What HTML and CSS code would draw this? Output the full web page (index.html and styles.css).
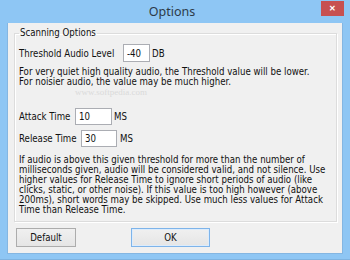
FILE: index.html
```html
<!DOCTYPE html>
<html lang="en">
<head>
    <meta charset="UTF-8">
    <title>Options</title>
    <link rel="stylesheet" href="styles.css">
</head>
<body>
    <div class="window">
        <div class="titlebar">
            <span class="title">Options</span>
            <button class="close">&#x2715;</button>
        </div>
        <div class="client">
            <fieldset class="group">
                <legend>Scanning Options</legend>
                <div class="row row-threshold">
                    <span class="label">Threshold Audio Level</span>
                    <input class="box box-threshold" type="text" value="-40">
                    <span class="unit">DB</span>
                </div>
                <p class="note">
                    For very quiet high quality audio, the Threshold value will be lower.<br>
                    For noisier audio, the value may be much higher.
                </p>
                <div class="mark">www.softpedia.com</div>
                <div class="row row-attack">
                    <span class="label">Attack Time</span>
                    <input class="box box-attack" type="text" value="10">
                    <span class="unit">MS</span>
                </div>
                <div class="row row-release">
                    <span class="label">Release Time</span>
                    <input class="box box-release" type="text" value="30">
                    <span class="unit">MS</span>
                </div>
                <p class="note note-long">
                    If audio is above this given threshold for more than the number of<br>
                    milliseconds given, audio will be considered valid, and not silence. Use<br>
                    higher values for Release Time to ignore short periods of audio (like<br>
                    clicks, static, or other noise). If this value is too high however (above<br>
                    200ms), short words may be skipped. Use much less values for Attack<br>
                    Time than Release Time.
                </p>
            </fieldset>
            <div class="actions">
                <button class="btn btn-default">Default</button>
                <button class="btn btn-ok">OK</button>
            </div>
        </div>
    </div>
</body>
</html>
```

FILE: styles.css
```css
* {
    margin: 0;
    padding: 0;
    box-sizing: border-box;
}
body {
    width: 350px;
    height: 260px;
    background: #8ec6f4;
    font-family: "DejaVu Sans Condensed", "DejaVu Sans", sans-serif;
    font-stretch: condensed;
    font-size: 9.6px;
    color: #111;
}
.window {
    width: 350px;
    height: 260px;
    display: flex;
    flex-direction: column;
    border-bottom: solid 1px #7fb3e0;
}
.titlebar {
    height: 23px;
    display: grid;
    grid-template-columns: 1fr auto 1fr;
    padding-right: 6px;
}
.title {
    grid-column: 2;
    font-family: "Noto Sans", sans-serif;
    font-stretch: normal;
    font-size: 12.5px;
    line-height: 24px;
    color: #2d3a48;
}
.close {
    grid-column: 3;
    justify-self: end;
    width: 23px;
    height: 15px;
    margin-top: 1px;
    border: none;
    background: #c75050;
    color: #fff;
    font-size: 8px;
    font-weight: bold;
    line-height: 15px;
}
/* client area of the dialog */
.client {
    height: 231px;
    margin: 0 7px;
    background: #f0f0f0;
    border: solid 1px #84b6e2;
    border-top: none;
    padding: 0 5px 0 6px;
}
.group {
    margin-top: 4px;
    border: solid 1px #dcdcdc;
    box-shadow: inset 1px 1px 0 #fff, 1px 1px 0 #fff;
    padding: 5px 4px 6px 4px;
}
.group legend {
    line-height: 12px;
    padding: 0 1px;
}
.row {
    display: flex;
    align-items: center;
    white-space: nowrap;
}
.unit {
    margin-left: 2px;
}
.row-threshold {
    height: 18px;
}
.row-threshold .label {
    width: 104px;
}
.row-attack {
    height: 17px;
    margin-top: 11px;
}
.row-attack .label {
    width: 56px;
}
.row-release {
    height: 17px;
    margin-top: 5px;
}
.row-release .label {
    width: 62px;
}
.row-release .unit {
    margin-left: 3px;
}
.box {
    height: 100%;
    border: solid 1px #abadb3;
    background: #fff;
    font: inherit;
    color: #111;
    padding-left: 3px;
}
.box-threshold {
    width: 27px;
}
.box-attack {
    width: 37px;
}
.box-release {
    width: 36px;
}
.note {
    margin-top: 5px;
    line-height: 10px;
    white-space: nowrap;
}
.note-long {
    margin-top: 8px;
}
.mark {
    height: 10px;
    margin-left: 56px;
    font-family: "Liberation Serif", serif;
    font-size: 9px;
    line-height: 10px;
    color: #dadada;
}
.actions {
    display: flex;
    margin-top: 6px;
    padding-left: 2px;
}
.btn {
    height: 19px;
    border: solid 1px #acacac;
    background: linear-gradient(#f0f0f0, #e5e5e5);
    font: inherit;
    color: #111;
}
.btn-default {
    width: 60px;
}
.btn-ok {
    width: 79px;
    margin-left: 55px;
    border-color: #7eb4ea;
    box-shadow: inset 0 0 0 1px #dcecfc;
}
```
